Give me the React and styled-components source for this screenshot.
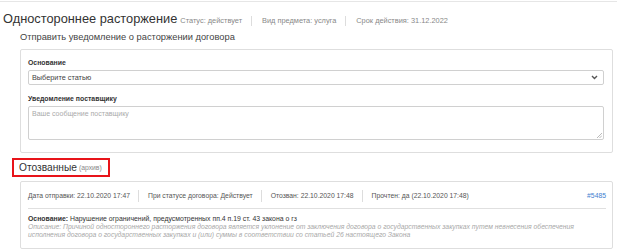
import React from 'react'
import styled, { createGlobalStyle } from 'styled-components'

const Global = createGlobalStyle`
  body {
    margin: 0;
    background: #ffffff;
    font-family: "Liberation Sans", Arial, sans-serif;
    color: #333333;
  }
`

const Page = styled.div`
  width: 617px;
  height: 250px;
  overflow: hidden;
  padding-top: 1px;
  box-sizing: border-box;
`

const Header = styled.div`
  border-top: 1px solid #e6e6e6;
  display: flex;
  align-items: baseline;
  padding: 9px 0 0 3px;
  height: 16px;
`

const Title = styled.h1`
  margin: 0;
  font-size: 12.8px;
  font-weight: 400;
  color: #333;
  line-height: 16px;
  margin-right: 3px;
`

const Meta = styled.span`
  font-size: 7.4px;
  color: #888;
  padding: 0 9px 0 ${p => (p.$first ? '0' : '10px')};
  border-left: ${p => (p.$first ? 'none' : '1px solid #ddd')};
  line-height: 10px;
`

const Subtitle = styled.div`
  font-size: 9.3px;
  color: #444;
  margin: 4px 0 0 20px;
  line-height: 12px;
`

const Panel = styled.div`
  margin: ${p => p.$top}px 4px 0 20px;
  border: 1px solid #dedede;
  border-radius: 2px;
  box-sizing: border-box;
  height: ${p => p.$h}px;
  padding: ${p => p.$pad};
`

const Label = styled.div`
  font-size: 6.9px;
  font-weight: 700;
  color: #333;
  line-height: 9px;
  margin-bottom: ${p => p.$mb}px;
`

const Select = styled.div`
  height: 15px;
  border: 1px solid #d0d0d0;
  border-radius: 2px;
  box-sizing: border-box;
  display: flex;
  align-items: center;
  justify-content: space-between;
  padding: 0 5px 0 3px;
  font-size: 7.3px;
  color: #444;
  margin-bottom: 9px;
`

const Textarea = styled.div`
  position: relative;
  height: 34px;
  border: 1px solid #d0d0d0;
  border-radius: 2px;
  box-sizing: border-box;
  padding: 3px 3px;
  font-size: 7px;
  color: #aaa;
`

const Grip = styled.svg`
  position: absolute;
  right: 1px;
  bottom: 1px;
`

const ArchiveHead = styled.div`
  margin: 5px 0 0 12px;
  width: 98px;
  height: 19px;
  box-sizing: border-box;
  border: 2px solid #e8141a;
  display: flex;
  align-items: center;
  padding-left: 5px;
  gap: 2px;
`

const ArchiveTitle = styled.span`
  font-size: 10.2px;
  color: #333;
`

const ArchiveNote = styled.span`
  font-size: 6.8px;
  color: #888;
`

const InfoRow = styled.div`
  display: flex;
  align-items: center;
  height: 13px;
  padding-bottom: 6px;
  border-bottom: 1px solid #e0e0e0;
  margin-right: 6px;
`

const Info = styled.span`
  font-size: 6.8px;
  color: #555;
  padding: 0 8px 0 ${p => (p.$first ? '0' : '9px')};
  line-height: 12px;
  border-left: ${p => (p.$first ? 'none' : '1px solid #ddd')};
  white-space: nowrap;
`

const Link = styled.span`
  margin-left: auto;
  font-size: 6.8px;
  color: #3f7fd0;
`

const Basis = styled.div`
  margin-top: 6px;
  font-size: 6.9px;
  line-height: 8px;
  color: #333;
  b { font-weight: 700; }
`

const Desc = styled.div`
  font-size: 6.8px;
  line-height: 8px;
  color: #a8a8a8;
  font-style: italic;
  padding-right: 30px;
`

const Chevron = () => (
  <svg width="7" height="5" viewBox="0 0 7 5">
    <path d="M1 1 L3.5 3.5 L6 1" fill="none" stroke="#555" strokeWidth="1.4" />
  </svg>
)

export default function App() {
  return (
    <Page>
      <Global />
      <Header>
        <Title>Одностороннее расторжение</Title>
        <Meta $first>Статус: действует</Meta>
        <Meta>Вид предмета: услуга</Meta>
        <Meta>Срок действия: 31.12.2022</Meta>
      </Header>
      <Subtitle>Отправить уведомление о расторжении договора</Subtitle>
      <Panel $top={6} $h={104} $pad="8px 8px 0 7px">
        <Label $mb={3}>Основание</Label>
        <Select>
          <span>Выберите статью</span>
          <Chevron />
        </Select>
        <Label $mb={3}>Уведомление поставщику</Label>
        <Textarea>
          Ваше сообщение поставщику
          <Grip width="6" height="6" viewBox="0 0 6 6">
            <path d="M6 1 L1 6 M6 3.5 L3.5 6" stroke="#aaa" strokeWidth="0.8" />
          </Grip>
        </Textarea>
      </Panel>
      <ArchiveHead>
        <ArchiveTitle>Отозванные</ArchiveTitle>
        <ArchiveNote>(архив)</ArchiveNote>
      </ArchiveHead>
      <Panel $top={4} $h={68} $pad="7px 0 0 7px">
        <InfoRow>
          <Info $first>Дата отправки: 22.10.2020 17:47</Info>
          <Info>При статусе договора: Действует</Info>
          <Info>Отозван: 22.10.2020 17:48</Info>
          <Info>Прочтен: да (22.10.2020 17:48)</Info>
          <Link>#5485</Link>
        </InfoRow>
        <Basis>
          <b>Основание:</b> Нарушение ограничений, предусмотренных пп.4 п.19 ст. 43 закона о гз
        </Basis>
        <Desc>
          Описание: Причиной одностороннего расторжения договора является уклонение от заключения договора о государственных закупках путем невнесения обеспечения исполнения договора о государственных закупках и (или) суммы в соответствии со статьей 26 настоящего Закона
        </Desc>
      </Panel>
    </Page>
  )
}
